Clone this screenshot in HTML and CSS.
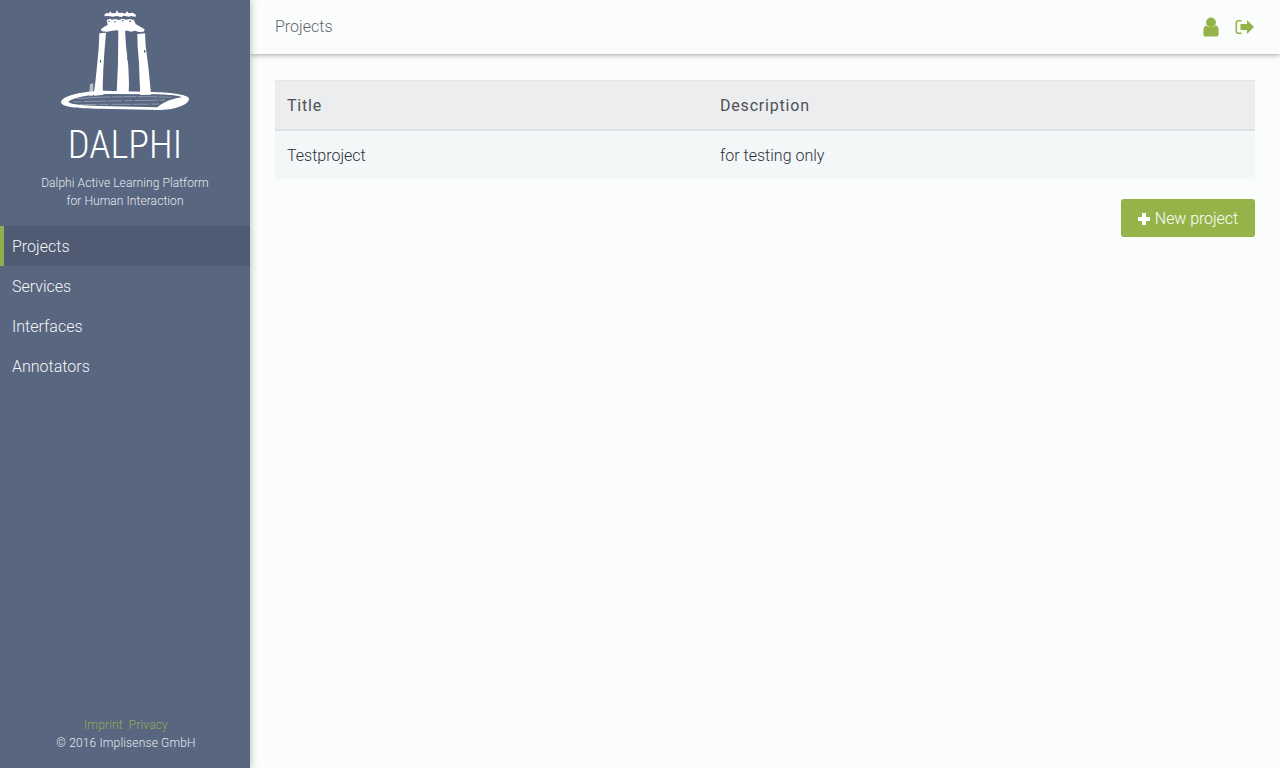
FILE: index.html
```html
<!DOCTYPE html>
<html lang="en">
<head>
<meta charset="utf-8">
<title>Dalphi</title>
<link rel="stylesheet" href="styles.css">
</head>
<body>
<div class="app">
  <aside class="sidebar">
    <div class="brand">
      <svg class="logo" width="170" height="120" viewBox="0 0 510 360" aria-hidden="true">
        <path fill="#fff" fill-rule="evenodd" d="M63 305C70 285 130 274 190 272L340 276C400 278 447 285 447 296C447 315 400 330 355 330L180 326C110 325 63 322 63 305zM85 306C95 314 130 317 180 318L352 322C370 305 400 296 425 292C425 288 385 284 340 283L200 282C140 284 95 294 85 306z"/>
        <g fill="none" stroke="#dfe3ea" stroke-width="1.200">
          <path d="M110 296C180 290 300 288 395 292" stroke-dasharray="40 3 60 4 30 2"/>
          <path d="M100 306C180 302 300 302 375 300" stroke-dasharray="24 6 70 5 40 8"/>
          <path d="M120 314C200 312 280 314 356 312" stroke-dasharray="50 6 30 7 60 5"/>
        </g>
        <g fill="#fff">
          <path d="M193 44l6-5 8 1 4-6 4 6 12-1 4-8 5 8 12-1 6 3 8-7 4 6 12-2 10 6-2 7-12-3-8 2-14-3-8 4-14-3-12 2-14-2-10 1z"/>
          <path d="M200 60l10-4 6 3 10-2 10 3 12-4 10 3 12-2 12 3 5 12 14 8 13 8-3 7-14 1-12-4-12 3-10-3-20 1-14-2-16 2-12 2-16-1-2-7 12-8 8-4z"/>
          <path d="M178 100l20-2-5 60-3 50-2 52 2 24-26 3-5-4 4-14 3-22 5-48 5-52z"/>
          <path d="M235 90l20-1 3 48 7 62 2 50-1 28-36 0 2-40 2-50z"/>
          <path d="M292 102l23-2 2 38 8 62 6 60 2 24-32 1-2-40-2-55-4-50z"/>
          <path d="M150 252l10-2-1 38-12 1z" opacity=".6"/>
        </g>
        <g fill="#586680">
          <rect x="205" y="62" width="4" height="4"/>
          <rect x="222" y="64" width="5" height="3"/>
          <rect x="246" y="60" width="4" height="4"/>
          <rect x="268" y="62" width="5" height="4"/>
          <rect x="284" y="64" width="3" height="3"/>
          <rect x="262" y="170" width="3" height="10"/>
          <rect x="312" y="150" width="4" height="8"/>
          <rect x="180" y="180" width="3" height="8"/>
        </g>
      </svg>
      <h1 class="brand-name">DALPHI</h1>
      <p class="brand-tag">Dalphi Active Learning Platform<br>for Human Interaction</p>
    </div>
    <nav class="nav">
      <a class="nav-item is-active">Projects</a>
      <a class="nav-item">Services</a>
      <a class="nav-item">Interfaces</a>
      <a class="nav-item">Annotators</a>
    </nav>
    <footer class="side-foot">
      <div class="foot-links"><a>Imprint</a><a>Privacy</a></div>
      <div>© 2016 Implisense GmbH</div>
    </footer>
  </aside>
  <div class="main">
    <header class="topbar">
      <span class="page-title">Projects</span>
      <div class="top-icons">
        <svg class="icon" width="16" height="20" viewBox="0 0 16 20" aria-hidden="true"><circle cx="8" cy="5.400" r="4.900" fill="#94b449"/><path d="M3.400 8.600c1.200 1 2.800 1.600 4.600 1.600s3.400-.6 4.600-1.600c2 .4 3 2.100 3 4.600v4c0 1.500-1 2.300-2.300 2.300H2.700C1.400 19.500.4 18.700.4 17.200v-4c0-2.500 1-4.200 3-4.600z" fill="#94b449"/></svg>
        <svg class="icon" width="20" height="16" viewBox="0 0 20 16" aria-hidden="true"><path d="M6.500 1.800H3.500C2.200 1.800 1.300 2.700 1.300 4v8c0 1.300.9 2.200 2.200 2.200h3" fill="none" stroke="#94b449" stroke-width="1.600"/><path d="M12 1L19 8l-7 7v-4H5.500V5H12z" fill="#94b449"/></svg>
      </div>
    </header>
    <section class="content">
      <table class="table">
        <thead><tr><th class="col-title">Title</th><th>Description</th></tr></thead>
        <tbody><tr><td>Testproject</td><td>for testing only</td></tr></tbody>
      </table>
      <div class="actions">
        <a class="btn"><svg class="btn-icon" width="12" height="12" viewBox="0 0 12 12" aria-hidden="true"><path d="M4 0h4v4h4v4H8v4H4V8H0V4h4z" fill="#fff"/></svg>New project</a>
      </div>
    </section>
  </div>
</div>
</body>
</html>
```
FILE: styles.css
```css
* { box-sizing: border-box; }
html, body { margin: 0; height: 100%; }
body {
  font-family: Roboto, "Liberation Sans", sans-serif;
  font-weight: 300;
  font-size: 16px;
  color: #2a303a;
  background: #fbfdfc;
  overflow: hidden;
}
.app { display: flex; height: 768px; }
.sidebar {
  width: 250px;
  flex: none;
  display: flex;
  flex-direction: column;
  background: #586680;
  color: #fff;
  box-shadow: 0 0 8px rgba(0, 0, 0, .3);
  position: relative;
  z-index: 2;
}
.brand { text-align: center; }
.logo { display: block; margin-left: 40px; }
.brand-name {
  margin: 0;
  font-size: 38.500px;
  line-height: 50px;
  font-weight: 350;
  letter-spacing: 0;
  color: #fff;
  font-stretch: 75%;
}
.brand-tag {
  margin: 4px 0 0;
  font-size: 12px;
  line-height: 18px;
  font-weight: 300;
  letter-spacing: .08px;
  color: #e6eaf0;
}
.nav { display: flex; flex-direction: column; margin-top: 16px; }
.nav-item {
  height: 40px;
  line-height: 42px;
  padding-left: 12px;
  color: #fff;
  opacity: .95;
}
.nav-item.is-active {
  background: #4e5b73;
  box-shadow: inset 4px 0 0 #94b449;
}
.side-foot {
  margin-top: auto;
  padding: 0 0 16px 2px;
  text-align: center;
  font-size: 12px;
  line-height: 18px;
  letter-spacing: .15px;
  color: #e6eaf0;
}
.foot-links { display: flex; justify-content: center; gap: 6px; color: #8fae55; }
.main { flex: 1; display: flex; flex-direction: column; min-width: 0; }
.topbar {
  height: 54px;
  flex: none;
  display: flex;
  align-items: center;
  justify-content: space-between;
  padding: 0 25px 1px;
  background: #fbfdfc;
  box-shadow: 0 1px 5px rgba(0, 0, 0, .35);
}
.page-title { color: #5c6470; }
.top-icons { display: flex; align-items: center; gap: 16px; }
.icon { display: block; }
.content { padding: 26px 25px 0; }
.table { width: 100%; border-collapse: separate; border-spacing: 0; table-layout: fixed; }
th, td { text-align: left; padding: 0 12px; }
th {
  height: 51px;
  background: #ecedef;
  border-top: 1px solid #e4e6e8;
  border-bottom: 2px solid #dfe2e5;
  font-weight: 450;
  letter-spacing: .8px;
  color: #4c5258;
}
.col-title { width: 433px; }
td { height: 48px; background: #f4f7f8; font-weight: 300; }
.actions { display: flex; justify-content: flex-end; margin-top: 20px; }
.btn {
  display: flex;
  align-items: center;
  gap: 5px;
  height: 38px;
  padding: 1px 17px 0;
  background: #94b449;
  color: #fff;
  border-radius: 3px;
  letter-spacing: -.08px;
}
.btn-icon { display: block; }
```
